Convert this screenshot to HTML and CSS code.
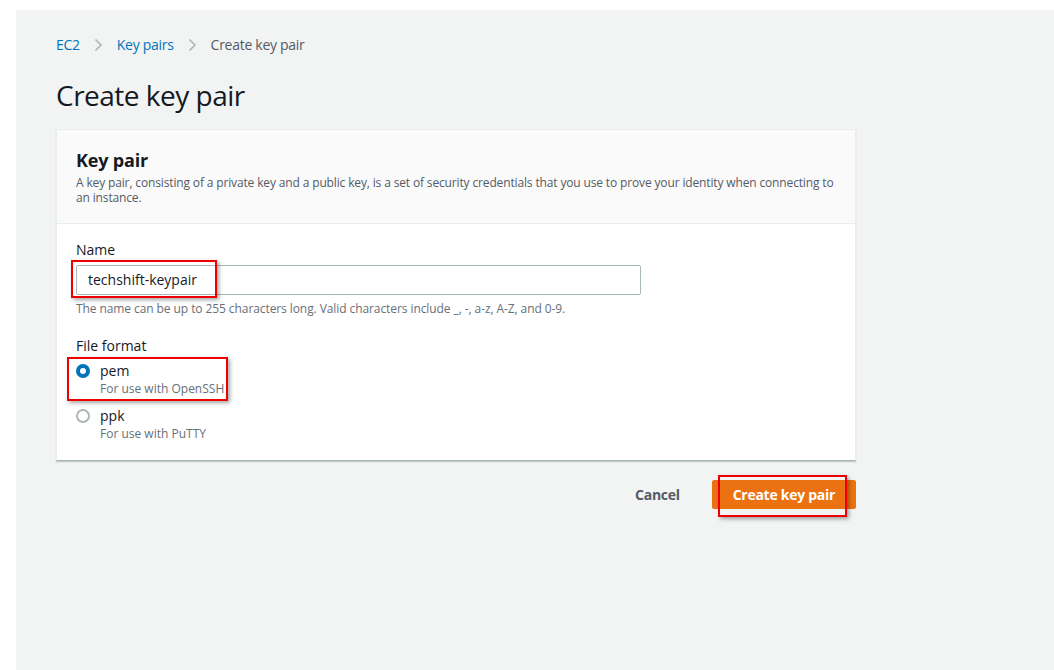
FILE: index.html
```html
<!DOCTYPE html>
<html>
<head>
<meta charset="utf-8">
<link rel="stylesheet" href="styles.css">
</head>
<body>
<div class="page">
  <main class="content">
    <nav class="crumbs">
      <a class="crumb-link">EC2</a>
      <svg class="chev" width="13" height="14" viewBox="0 0 13 14"><path d="M3.5 1.5 L9 7 L3.5 12.5" fill="none" stroke="#aab7b8" stroke-width="1.6"/></svg>
      <a class="crumb-link">Key pairs</a>
      <svg class="chev" width="13" height="14" viewBox="0 0 13 14"><path d="M3.5 1.5 L9 7 L3.5 12.5" fill="none" stroke="#aab7b8" stroke-width="1.6"/></svg>
      <span class="crumb-current">Create key pair</span>
    </nav>
    <h1 class="title">Create key pair</h1>

    <section class="panel">
      <header class="panel-head">
        <h2 class="panel-title">Key pair</h2>
        <p class="panel-desc">A key pair, consisting of a private key and a public key, is a set of security credentials that you use to prove your identity when connecting to an instance.</p>
      </header>
      <div class="panel-body">
        <div class="field">
          <label class="label">Name</label>
          <div class="input-wrap">
            <div class="input">techshift-keypair</div>
            <div class="mark mark-input"></div>
          </div>
          <div class="hint">The name can be up to 255 characters long. Valid characters include _, -, a-z, A-Z, and 0-9.</div>
        </div>
        <div class="field field-format">
          <label class="label">File format</label>
          <div class="radios">
            <div class="radio-row">
              <span class="radio radio-on"></span>
              <div class="radio-text">
                <div class="radio-label">pem</div>
                <div class="radio-desc">For use with OpenSSH</div>
              </div>
              <div class="mark mark-pem"></div>
            </div>
            <div class="radio-row">
              <span class="radio"></span>
              <div class="radio-text">
                <div class="radio-label">ppk</div>
                <div class="radio-desc">For use with PuTTY</div>
              </div>
            </div>
          </div>
        </div>
      </div>
    </section>

    <div class="actions">
      <button class="btn-link">Cancel</button>
      <div class="btn-wrap">
        <button class="btn-primary">Create key pair</button>
        <div class="mark mark-btn"></div>
      </div>
    </div>
  </main>
</div>
</body>
</html>
```

FILE: styles.css
```css
* { box-sizing: border-box; }
html, body { margin: 0; padding: 0; background: #ffffff; }
body {
  font-family: "Open Sans", "Noto Sans", "Liberation Sans", sans-serif;
  color: #16191f;
  width: 1054px;
  height: 670px;
  overflow: hidden;
}
.page {
  padding: 10px 0 0 16px;
  height: 670px;
}
.content {
  background: #f2f3f3;
  height: 660px;
  padding: 25px 0 0 40px;
}
.crumbs {
  display: flex;
  align-items: center;
  gap: 12px;
  font-size: 14px;
  line-height: 20px;
  height: 20px;
  letter-spacing: -0.02em;
}
.crumb-link { color: #0073bb; }
.crumb-current { color: #545b64; }
.chev { display: block; }
.title {
  margin: 22px 0 0 0;
  font-size: 28px;
  line-height: 36px;
  font-weight: 400;
  color: #16191f;
  letter-spacing: -0.018em;
}
.panel {
  margin-top: 16px;
  width: 800px;
  background: #ffffff;
  border: 1px solid #eaeded;
  border-bottom: 1px solid #aab7b8;
  box-shadow: 0 1px 1px rgba(0,28,36,0.2);
}
.panel-head {
  background: #fafafa;
  border-bottom: 1px solid #eaeded;
  padding: 18px 19px 18px 19px;
}
.panel-title {
  margin: 0;
  font-size: 18px;
  line-height: 24px;
  font-weight: 700;
  color: #16191f;
  letter-spacing: -0.01em;
}
.panel-desc {
  margin: 3px 0 0 0;
  font-size: 12px;
  line-height: 15px;
  color: #545b64;
  letter-spacing: -0.012em;
}
.panel-body {
  padding: 16px 19px 18px 19px;
}
.label {
  display: block;
  font-size: 14px;
  line-height: 20px;
  color: #16191f;
}
.input-wrap {
  position: relative;
  margin-top: 5px;
  width: 565px;
}
.input {
  height: 30px;
  border: 1px solid #aab7b8;
  border-radius: 2px;
  background: #ffffff;
  padding: 0 11px;
  font-size: 14px;
  line-height: 28px;
  color: #16191f;
}
.hint {
  margin-top: 6px;
  font-size: 12px;
  line-height: 16px;
  color: #687078;
  letter-spacing: -0.007em;
}
.field-format { margin-top: 19px; }
.radios {
  margin-top: 5px;
  display: flex;
  flex-direction: column;
  gap: 9px;
}
.radio-row {
  position: relative;
  display: flex;
  align-items: flex-start;
  gap: 10px;
}
.radio {
  margin-top: 3px;
  width: 14px;
  height: 14px;
  border-radius: 50%;
  border: 2px solid #aab7b8;
  background: #fff;
  flex: none;
}
.radio-on {
  border: 4px solid #0073bb;
}
.radio-label {
  font-size: 14px;
  line-height: 20px;
  color: #16191f;
}
.radio-desc {
  font-size: 12px;
  line-height: 16px;
  color: #687078;
}
.actions {
  width: 800px;
  margin-top: 19px;
  display: flex;
  justify-content: flex-end;
  align-items: center;
  gap: 12px;
}
.btn-link {
  border: none;
  background: transparent;
  font-family: inherit;
  font-size: 14px;
  font-weight: 700;
  color: #545b64;
  padding: 4px 20px;
  line-height: 20px;
  letter-spacing: -0.02em;
}
.btn-wrap { position: relative; }
.btn-primary {
  display: block;
  border: 1px solid #ec7211;
  background: #ec7211;
  color: #ffffff;
  font-family: inherit;
  font-size: 14px;
  font-weight: 700;
  line-height: 20px;
  padding: 3px 20px;
  border-radius: 2px;
  height: 29px;
  white-space: nowrap;
  letter-spacing: -0.02em;
}
.mark {
  position: absolute;
  border: 2px solid #ee0000;
  box-shadow: 2px 2px 4px rgba(0,0,0,0.35);
  pointer-events: none;
}
.mark-input {
  left: -5px;
  top: -5px;
  width: 146px;
  height: 38px;
}
.mark-pem {
  left: -9px;
  top: -4px;
  width: 161px;
  height: 44px;
}
.mark-btn {
  left: 6px;
  top: -5px;
  width: 129px;
  height: 42px;
}
```
